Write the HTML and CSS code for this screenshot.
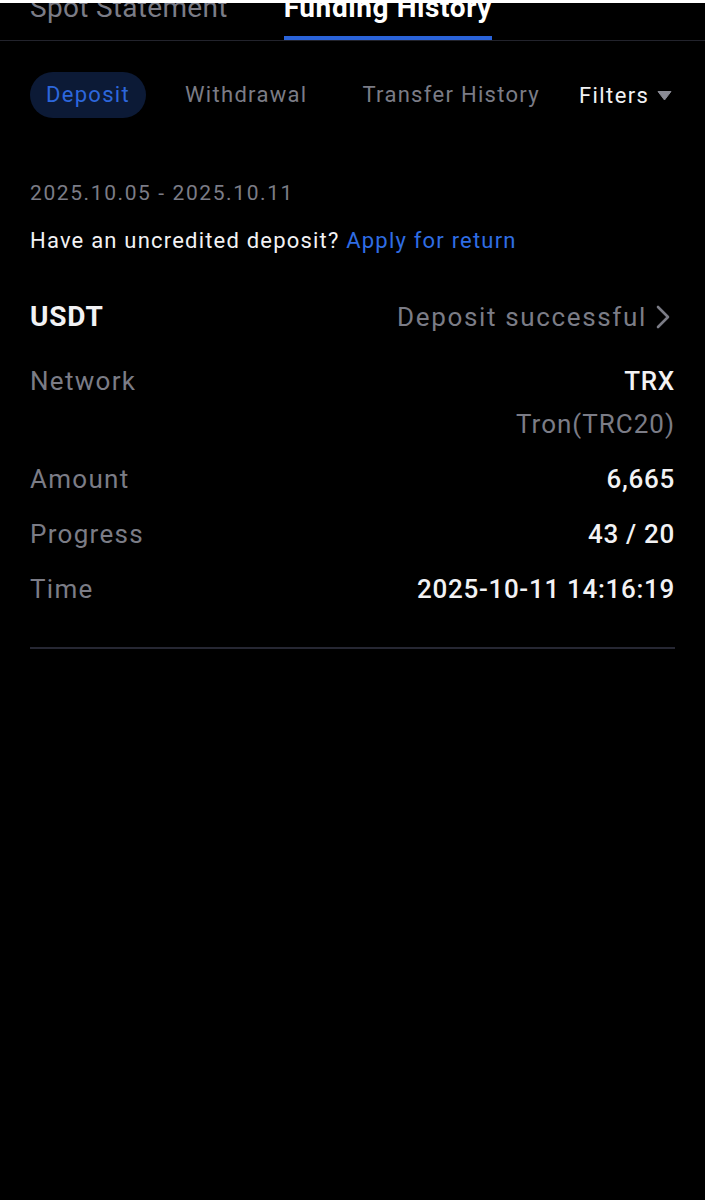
FILE: index.html
```html
<!DOCTYPE html>
<html lang="en">
<head>
    <meta charset="UTF-8">
    <meta name="viewport" content="width=device-width, initial-scale=1.0">
    <title>Funding History</title>
    <link rel="stylesheet" href="styles.css">
</head>
<body>
    <div class="top-strip"></div>

    <nav class="tabs">
        <span class="tab">Spot Statement</span>
        <span class="tab active">Funding History</span>
    </nav>

    <div class="subtabs">
        <span class="subtab selected">Deposit</span>
        <span class="subtab">Withdrawal</span>
        <span class="subtab">Transfer History</span>
        <span class="filters">Filters
            <svg class="caret" width="15" height="11" viewBox="0 0 15 11">
                <path d="M1 1.5 H14 L7.5 10 Z" fill="#8a8b95" stroke="#8a8b95" stroke-width="1" stroke-linejoin="round"/>
            </svg>
        </span>
    </div>

    <div class="range">2025.10.05 - 2025.10.11</div>
    <p class="notice">Have an uncredited deposit? <a href="#">Apply for return</a></p>

    <section class="record">
        <div class="record-head">
            <span class="coin">USDT</span>
            <span class="status">Deposit successful
                <svg class="chevron" width="16" height="24" viewBox="0 0 16 24">
                    <path d="M3 2 L13 12 L3 22" fill="none" stroke="#7b7c86" stroke-width="2.6" stroke-linecap="round" stroke-linejoin="round"/>
                </svg>
            </span>
        </div>
        <div class="row">
            <span class="label">Network</span>
            <div class="value">
                <div>TRX</div>
                <div class="sub">Tron(TRC20)</div>
            </div>
        </div>
        <div class="row">
            <span class="label">Amount</span>
            <div class="value">6,665</div>
        </div>
        <div class="row">
            <span class="label">Progress</span>
            <div class="value">43 / 20</div>
        </div>
        <div class="row">
            <span class="label">Time</span>
            <div class="value">2025-10-11 14:16:19</div>
        </div>
    </section>
</body>
</html>
```

FILE: styles.css
```css
html, body {
    margin: 0;
    background-color: #000;
    color: #f2f2f4;
    font-family: Roboto, "Liberation Sans", sans-serif;
}
.top-strip {
    height: 3px;
    background-color: #fff;
}
.tabs {
    height: 37px;
    overflow: hidden;
    display: flex;
    align-items: flex-end;
    gap: 56px;
    padding-left: 30px;
    border-bottom: 1px solid #22232c;
}
.tab {
    font-size: 28px;
    line-height: 28px;
    padding-bottom: 18px;
    color: #7b7c86;
    letter-spacing: 0.3px;
    white-space: nowrap;
}
.tab.active {
    color: #fff;
    font-weight: 700;
    letter-spacing: 0.6px;
    padding-bottom: 14px;
    border-bottom: 4px solid #2a63d9;
}
.subtabs {
    display: flex;
    align-items: center;
    gap: 23px;
    margin-top: 31px;
    padding: 0 34px 0 30px;
}
.subtab {
    font-size: 22px;
    line-height: 46px;
    padding: 0 16px;
    color: #7b7c86;
    letter-spacing: 1.3px;
    border-radius: 23px;
    white-space: nowrap;
}
.subtab:not(.selected) {
    padding: 0;
    margin: 0 16px;
}
.subtab.selected {
    background-color: #0c1a36;
    color: #2d67dc;
}
.filters {
    margin-left: auto;
    display: flex;
    align-items: center;
    gap: 8px;
    font-size: 22px;
    color: #f2f2f4;
    letter-spacing: 1.4px;
    white-space: nowrap;
}
.range {
    margin-top: 59px;
    padding: 0 30px;
    font-size: 21px;
    line-height: 32px;
    color: #7b7c86;
    letter-spacing: 1.6px;
}
.notice {
    margin: 16px 0 0;
    padding: 0 30px;
    font-size: 22px;
    line-height: 32px;
    letter-spacing: 1.2px;
    color: #f2f2f4;
}
.notice a {
    color: #2f6de4;
    text-decoration: none;
}
.record {
    margin: 44px 30px 0;
    padding-bottom: 42px;
    border-bottom: 2px solid #262733;
}
.record-head {
    display: flex;
    justify-content: space-between;
    align-items: center;
    line-height: 32px;
    margin-bottom: 32px;
}
.coin {
    font-size: 28px;
    font-weight: 700;
    letter-spacing: 0.8px;
}
.status {
    display: flex;
    align-items: center;
    gap: 8px;
    font-size: 26px;
    color: #7b7c86;
    letter-spacing: 1.65px;
}
.chevron {
    margin-right: 4px;
}
.row {
    display: flex;
    justify-content: space-between;
    align-items: flex-start;
    font-size: 26px;
    line-height: 32px;
    margin-bottom: 23px;
}
.row:last-child {
    margin-bottom: 0;
}
.label {
    color: #7b7c86;
    letter-spacing: 1.3px;
}
.value {
    text-align: right;
    font-weight: 500;
    letter-spacing: 0.7px;
}
.value .sub {
    margin-top: 11px;
    font-weight: 400;
    color: #7b7c86;
    letter-spacing: 1px;
}
```
